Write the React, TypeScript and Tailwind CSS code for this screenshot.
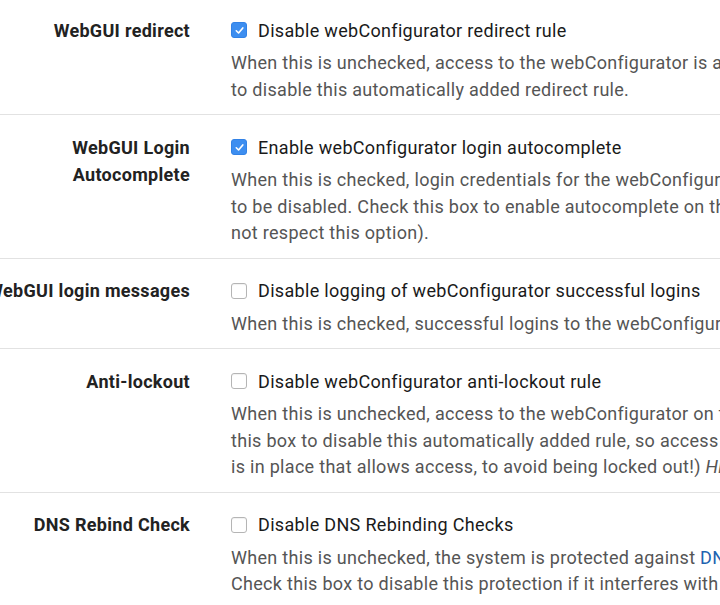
import React from "react";

type Row = {
  label: React.ReactNode;
  nowrapLabel?: boolean;
  checked: boolean;
  text: string;
  help: React.ReactNode[];
};

function Box({ checked }: { checked: boolean }) {
  if (checked) {
    return (
      <span className="w-[16px] h-[16px] rounded-[3px] bg-[#3d8ef0] border border-[#3282e6] flex items-center justify-center shrink-0">
        <svg width="11" height="11" viewBox="0 0 12 12">
          <path d="M2.5 6.3 L5 8.7 L9.6 3.2" fill="none" stroke="white" strokeWidth="1.8" strokeLinecap="round" strokeLinejoin="round" />
        </svg>
      </span>
    );
  }
  return <span className="w-[16px] h-[16px] rounded-[3px] bg-white border border-[#b5b5b5] shadow-[inset_0_1px_1px_rgba(0,0,0,0.06)] shrink-0" />;
}

const rows: Row[] = [
  {
    label: "WebGUI redirect",
    checked: true,
    text: "Disable webConfigurator redirect rule",
    help: [
      "When this is unchecked, access to the webConfigurator is always permitted even on port 80, regardless of the listening port configured. Check this box",
      "to disable this automatically added redirect rule.",
    ],
  },
  {
    label: (
      <>
        WebGUI Login
        <br />
        Autocomplete
      </>
    ),
    checked: true,
    text: "Enable webConfigurator login autocomplete",
    help: [
      "When this is checked, login credentials for the webConfigurator may be saved by the browser. While convenient, some security standards require this",
      "to be disabled. Check this box to enable autocomplete on the login form so that browsers will prompt to save credentials (NOTE: Some browsers do",
      "not respect this option).",
    ],
  },
  {
    label: "WebGUI login messages",
    nowrapLabel: true,
    checked: false,
    text: "Disable logging of webConfigurator successful logins",
    help: ["When this is checked, successful logins to the webConfigurator will not be logged."],
  },
  {
    label: "Anti-lockout",
    checked: false,
    text: "Disable webConfigurator anti-lockout rule",
    help: [
      "When this is unchecked, access to the webConfigurator on the LAN interface is always permitted, regardless of the user-defined firewall rule set. Check",
      "this box to disable this automatically added rule, so access to the webConfigurator is controlled by the user-defined firewall rules (ensure a firewall rule",
      <>
        is in place that allows access, to avoid being locked out!) <i>Hint:</i> the "Set interface(s) IP address" option in the console menu resets this setting as well.
      </>,
    ],
  },
  {
    label: "DNS Rebind Check",
    checked: false,
    text: "Disable DNS Rebinding Checks",
    help: [
      <>
        When this is unchecked, the system is protected against <span className="text-[#1f63b0]">DNS Rebinding attacks</span>. This blocks private IP responses from the configured DNS servers.
      </>,
      "Check this box to disable this protection if it interferes with webConfigurator access or name resolution in the environment.",
    ],
  },
];

export default function App() {
  return (
    <div className="w-[720px] h-[605px] overflow-hidden bg-white font-['Roboto',sans-serif]">
      {rows.map((r, i) => (
        <div
          key={i}
          className={`flex border-b border-[#e2e2e2] pb-[11px] ${i === 0 ? "pt-[17px]" : "pt-[19px]"}`}
        >
          <div className="w-[190px] shrink-0 flex justify-end">
            <div
              className={`text-right font-bold text-[18px] tracking-[0.3px] leading-[27px] -mt-[0.5px] text-[#222] ${r.nowrapLabel ? "whitespace-nowrap" : ""}`}
            >
              {r.label}
            </div>
          </div>
          <div className="pl-[41px] whitespace-nowrap">
            <div className="h-[26px] flex items-center gap-[11px] text-[18px] tracking-[0.32px] text-[#1a1a1a]">
              <Box checked={r.checked} />
              <span>{r.text}</span>
            </div>
            <div className="mt-[7px] text-[18px] tracking-[0.3px] leading-[26.5px] text-[#555]">
              {r.help.map((h, j) => (
                <div key={j}>{h}</div>
              ))}
            </div>
          </div>
        </div>
      ))}
    </div>
  );
}
